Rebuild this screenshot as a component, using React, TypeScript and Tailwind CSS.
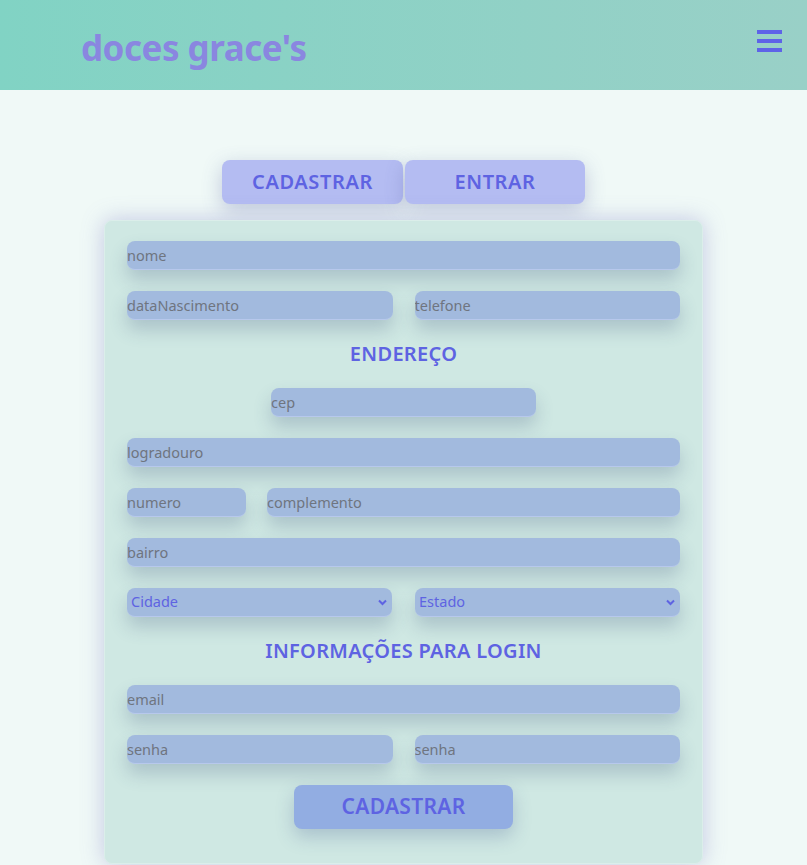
import React from 'react';

const font = { fontFamily: '"Noto Sans", "Open Sans", sans-serif' };

function Field({ placeholder, className = '' }: { placeholder: string; className?: string }) {
  return (
    <input
      placeholder={placeholder}
      className={`h-[29px] rounded-lg bg-[#a2bade] border-b border-[#b7c8ec] text-[14.5px] text-[#555] placeholder:text-[#6f7580] outline-none shadow-[0_10px_18px_rgba(60,80,120,0.24)] ${className}`}
    />
  );
}

function Select({ label }: { label: string }) {
  return (
    <div className="relative flex-1">
      <select className="appearance-none w-full h-[29px] rounded-lg bg-[#a2bade] border-b border-[#b7c8ec] pl-1 text-[14.5px] text-[#5e63e2] outline-none shadow-[0_10px_18px_rgba(60,80,120,0.24)]">
        <option>{label}</option>
      </select>
      <svg className="absolute right-[5px] top-[11px] pointer-events-none" width="9" height="7" viewBox="0 0 9 7">
        <path d="M1 1.5 L4.5 5 L8 1.5" fill="none" stroke="#5e63e2" strokeWidth="2" />
      </svg>
    </div>
  );
}

function Heading({ children }: { children: React.ReactNode }) {
  return (
    <h2 className="h-[26px] flex items-center justify-center text-[20px] tracking-[0.3px] font-semibold text-[#5e63e2]">
      {children}
    </h2>
  );
}

export default function App() {
  return (
    <div style={font} className="min-h-[865px] bg-[#f0f9f7]">
      {/* header */}
      <header className="h-[90px] bg-gradient-to-r from-[#81d3c4] to-[#99d0c7] flex items-center justify-between pl-[81px] pr-[25px]">
        <h1 className="text-[35px] font-bold text-[#8a86e0] tracking-[-0.5px] mt-[7px]">doces grace's</h1>
        <div className="flex flex-col gap-[5px] mt-[-8px]">
          <span className="block w-[25px] h-[4px] bg-[#5e63e8]" />
          <span className="block w-[25px] h-[4px] bg-[#5e63e8]" />
          <span className="block w-[25px] h-[4px] bg-[#5e63e8]" />
        </div>
      </header>

      <main className="flex flex-col items-center pt-[70px]">
        <div className="flex gap-[2px]">
          <button className="w-[181px] h-[44px] rounded-lg bg-[#b4bcf2] text-[20px] tracking-[0.6px] font-semibold text-[#5e63e2] shadow-[0_6px_20px_rgba(80,90,160,0.3)]">
            CADASTRAR
          </button>
          <button className="w-[180px] h-[44px] rounded-lg bg-[#b4bcf2] text-[20px] tracking-[0.6px] font-semibold text-[#5e63e2] shadow-[0_6px_20px_rgba(80,90,160,0.3)]">
            ENTRAR
          </button>
        </div>

        <form className="mt-[16px] w-[599px] rounded-lg bg-[#cfe8e3] border border-[#dbeeea] px-[22px] pt-[20px] pb-[34px] flex flex-col gap-[21px] shadow-[0_0_22px_rgba(110,110,190,0.35)]">
          <Field placeholder="nome" className="w-full" />
          <div className="flex gap-[22px]">
            <Field placeholder="dataNascimento" className="flex-1 min-w-0" />
            <Field placeholder="telefone" className="flex-1 min-w-0" />
          </div>
          <Heading>ENDEREÇO</Heading>
          <div className="flex justify-center">
            <Field placeholder="cep" className="w-[265px]" />
          </div>
          <Field placeholder="logradouro" className="w-full" />
          <div className="flex gap-[21px]">
            <Field placeholder="numero" className="w-[119px]" />
            <Field placeholder="complemento" className="flex-1 min-w-0" />
          </div>
          <Field placeholder="bairro" className="w-full" />
          <div className="flex gap-[23px]">
            <Select label="Cidade" />
            <Select label="Estado" />
          </div>
          <Heading>INFORMAÇÕES PARA LOGIN</Heading>
          <Field placeholder="email" className="w-full" />
          <div className="flex gap-[22px]">
            <Field placeholder="senha" className="flex-1 min-w-0" />
            <Field placeholder="senha" className="flex-1 min-w-0" />
          </div>
          <div className="flex justify-center">
            <button type="button" className="w-[219px] h-[44px] rounded-lg bg-[#92ade2] text-[21px] tracking-[0.3px] font-semibold text-[#5e63e2] shadow-[0_8px_18px_rgba(60,80,140,0.25)]">
              CADASTRAR
            </button>
          </div>
        </form>
      </main>
    </div>
  );
}
